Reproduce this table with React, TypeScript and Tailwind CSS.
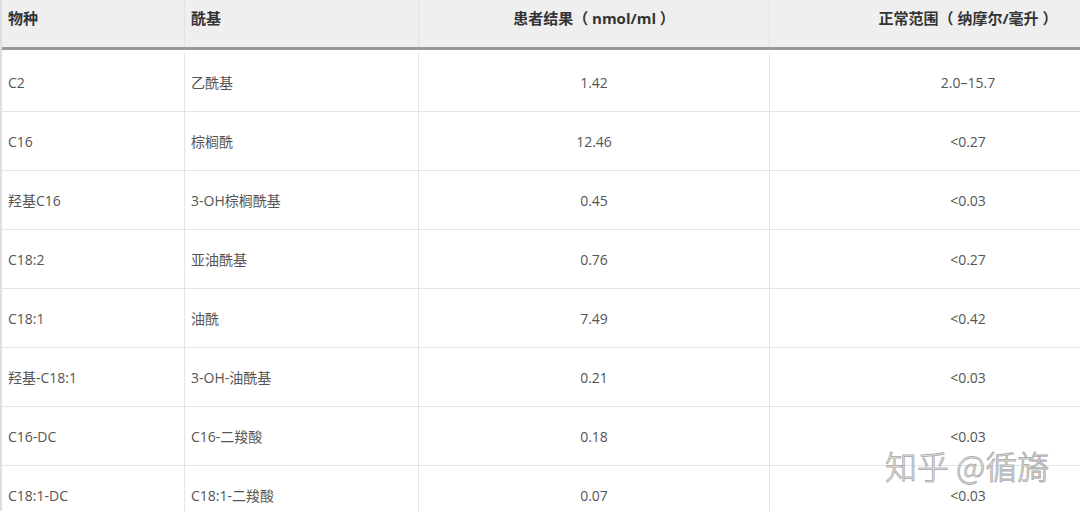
import React from 'react'

const ROWS = [
  ['C2', '乙酰基', '1.42', '2.0–15.7'],
  ['C16', '棕榈酰', '12.46', '<0.27'],
  ['羟基C16', '3-OH棕榈酰基', '0.45', '<0.03'],
  ['C18:2', '亚油酰基', '0.76', '<0.27'],
  ['C18:1', '油酰', '7.49', '<0.42'],
  ['羟基-C18:1', '3-OH-油酰基', '0.21', '<0.03'],
  ['C16-DC', 'C16-二羧酸', '0.18', '<0.03'],
  ['C18:1-DC', 'C18:1-二羧酸', '0.07', '<0.03'],
]

const font = { fontFamily: '"Open Sans", "Noto Sans CJK SC", sans-serif' }

export default function App() {
  return (
    <div className="relative w-[1080px] h-[511px] overflow-hidden bg-white" style={font}>
      <div className="w-[1166px] border-l-2 border-[#dedede]">
        {/* Header */}
        <div className="flex h-[50px] bg-[#efefef] border-b-[3px] border-[#989898] text-[15px] font-bold text-[#333]">
          <div className="w-[183px] shrink-0 pl-[6px] pt-[7px] border-r border-[#e2e2e2]">物种</div>
          <div className="w-[234px] shrink-0 pl-[6px] pt-[7px] border-r border-[#e2e2e2]">酰基</div>
          <div className="w-[351px] shrink-0 pt-[7px] text-center border-r border-[#e2e2e2]">患者结果（ nmol/ml ）</div>
          <div className="flex-1 pt-[7px] text-center">正常范围（ 纳摩尔/毫升 ）</div>
        </div>

        {/* Body */}
        {ROWS.map((r, i) => (
          <div
            key={i}
            className={`flex items-stretch border-b border-[#e4e4e4] text-[14px] text-[#555] ${i === 0 ? 'h-[62px] pt-[3px]' : 'h-[59px]'}`}
          >
            <div className="w-[183px] shrink-0 pl-[6px] flex items-center border-r border-[#e4e4e4]">{r[0]}</div>
            <div className="w-[234px] shrink-0 pl-[6px] flex items-center border-r border-[#e4e4e4]">{r[1]}</div>
            <div className="w-[351px] shrink-0 flex items-center justify-center border-r border-[#e4e4e4]">{r[2]}</div>
            <div className="flex-1 flex items-center justify-center">{r[3]}</div>
          </div>
        ))}
      </div>

      {/* Watermark */}
      <div
        className="absolute left-[885px] top-[449px] text-[32px] font-light text-white leading-none [-webkit-text-stroke:1px_#b0b0b0]"
        style={{ fontFamily: '"Noto Sans CJK SC", sans-serif' }}
      >
        知乎 @循旖
      </div>
    </div>
  )
}
